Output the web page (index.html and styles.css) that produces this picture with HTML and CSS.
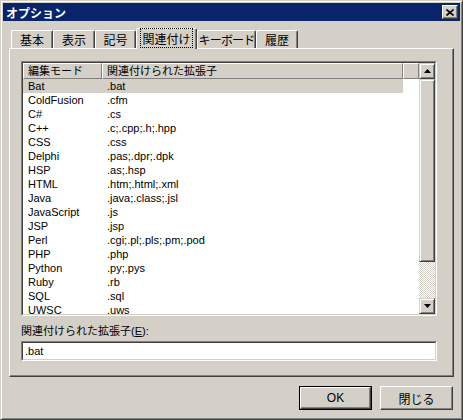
FILE: index.html
```html
<!DOCTYPE html>
<html lang="ja">
<head>
    <meta charset="UTF-8">
    <title>オプション</title>
    <link rel="stylesheet" href="styles.css">
</head>
<body>
    <div class="window">
        <div class="titlebar">
            <span class="title">オプション</span>
            <div class="close-btn">
                <svg width="8" height="7" viewBox="0 0 8 7"><path d="M0.5 0.5 L7.5 6.5 M7.5 0.5 L0.5 6.5" stroke="#000" stroke-width="1.6"/></svg>
            </div>
        </div>

        <div class="dialog-body">
            <div class="tabs">
                <div class="tab w42">基本</div>
                <div class="tab w42">表示</div>
                <div class="tab w41">記号</div>
                <div class="tab active"><span class="focus">関連付け</span></div>
                <div class="tab w59 tight">キーボード</div>
                <div class="tab w42">履歴</div>
            </div>

            <div class="panel">
                <div class="listbox">
                    <div class="list-inner">
                        <div class="list-main">
                            <div class="list-head">
                                <div class="hcell col1">編集モード</div>
                                <div class="hcell col2">関連付けられた拡張子</div>
                                <div class="hcell hfill"></div>
                            </div>
                            <div class="rows">
                                <div class="row selected"><span class="col1">Bat</span><span class="col2">.bat</span></div>
                                <div class="row"><span class="col1">ColdFusion</span><span class="col2">.cfm</span></div>
                                <div class="row"><span class="col1">C#</span><span class="col2">.cs</span></div>
                                <div class="row"><span class="col1">C++</span><span class="col2">.c;.cpp;.h;.hpp</span></div>
                                <div class="row"><span class="col1">CSS</span><span class="col2">.css</span></div>
                                <div class="row"><span class="col1">Delphi</span><span class="col2">.pas;.dpr;.dpk</span></div>
                                <div class="row"><span class="col1">HSP</span><span class="col2">.as;.hsp</span></div>
                                <div class="row"><span class="col1">HTML</span><span class="col2">.htm;.html;.xml</span></div>
                                <div class="row"><span class="col1">Java</span><span class="col2">.java;.class;.jsl</span></div>
                                <div class="row"><span class="col1">JavaScript</span><span class="col2">.js</span></div>
                                <div class="row"><span class="col1">JSP</span><span class="col2">.jsp</span></div>
                                <div class="row"><span class="col1">Perl</span><span class="col2">.cgi;.pl;.pls;.pm;.pod</span></div>
                                <div class="row"><span class="col1">PHP</span><span class="col2">.php</span></div>
                                <div class="row"><span class="col1">Python</span><span class="col2">.py;.pys</span></div>
                                <div class="row"><span class="col1">Ruby</span><span class="col2">.rb</span></div>
                                <div class="row"><span class="col1">SQL</span><span class="col2">.sql</span></div>
                                <div class="row"><span class="col1">UWSC</span><span class="col2">.uws</span></div>
                            </div>
                        </div>
                        <div class="vscroll">
                            <div class="sbtn">
                                <svg width="7" height="4" viewBox="0 0 7 4"><polygon points="3.5,0 7,4 0,4" fill="#000"/></svg>
                            </div>
                            <div class="thumb"></div>
                            <div class="track"></div>
                            <div class="sbtn">
                                <svg width="7" height="4" viewBox="0 0 7 4"><polygon points="0,0 7,0 3.5,4" fill="#000"/></svg>
                            </div>
                        </div>
                    </div>
                </div>

                <div class="field-label">関連付けられた拡張子(<u>E</u>):</div>
                <div class="textbox"><div class="textbox-inner">.bat</div></div>
            </div>

            <div class="buttons">
                <div class="btn default"><div class="btn-face">OK</div></div>
                <div class="btn"><div class="btn-face">閉じる</div></div>
            </div>
        </div>
    </div>
</body>
</html>
```

FILE: styles.css
```css
body {
    margin: 0;
    background: #d4d0c8;
    font-family: "Liberation Sans", "Noto Sans CJK JP", sans-serif;
    font-size: 11px;
    color: #000;
}
.window {
    box-sizing: border-box;
    width: 463px;
    height: 420px;
    padding: 2px;
    background: #d4d0c8;
    border: 1px solid;
    border-color: #d4d0c8 #404040 #404040 #d4d0c8;
    box-shadow: inset 1px 1px #fff, inset -1px -1px #808080;
}
.titlebar {
    height: 18px;
    background: #0a246a;
    display: flex;
    align-items: center;
    justify-content: space-between;
    padding: 0 2px 0 3px;
}
.title {
    color: #fff;
    font-weight: bold;
    font-size: 12px;
}
.close-btn {
    box-sizing: border-box;
    width: 16px;
    height: 14px;
    background: #d4d0c8;
    border: 1px solid;
    border-color: #fff #404040 #404040 #fff;
    box-shadow: inset -1px -1px #808080;
    display: flex;
    align-items: center;
    justify-content: center;
}
.dialog-body {
    padding: 7px 6px 0 6px;
}
.tabs {
    display: flex;
    align-items: flex-end;
    height: 20px;
    padding-left: 2px;
}
.tab {
    box-sizing: border-box;
    height: 18px;
    font-size: 12px;
    white-space: nowrap;
    display: flex;
    align-items: center;
    justify-content: center;
    border-top: 1px solid #fff;
    border-left: 1px solid #fff;
    border-right: 1px solid #404040;
    border-radius: 2px 2px 0 0;
    box-shadow: inset -1px 0 #808080;
    padding-bottom: 1px;
}
.w42 { width: 42px; }
.w41 { width: 41px; }
.w59 { width: 59px; }
.tab.tight {
    letter-spacing: -0.8px;
}
.tab.active {
    width: 61px;
    height: 21px;
    margin-bottom: -1px;
    position: relative;
    z-index: 1;
    background: #d4d0c8;
    padding-bottom: 2px;
}
.focus {
    outline: 1px dotted #000;
    padding: 1px 1px 0 1px;
}
.panel {
    box-sizing: border-box;
    width: 445px;
    height: 329px;
    border: 1px solid;
    border-color: #fff #404040 #404040 #fff;
    box-shadow: inset -1px -1px #808080;
    padding: 12px 0 0 11px;
}
.listbox {
    box-sizing: border-box;
    width: 416px;
    height: 255px;
    border: 1px solid;
    border-color: #808080 #fff #fff #808080;
}
.list-inner {
    box-sizing: border-box;
    height: 100%;
    border: 1px solid;
    border-color: #404040 #d4d0c8 #d4d0c8 #404040;
    background: #fff;
    display: flex;
}
.list-main {
    flex: 1;
    overflow: hidden;
}
.list-head {
    display: flex;
    height: 16px;
}
.hcell {
    box-sizing: border-box;
    height: 16px;
    background: #d4d0c8;
    border-top: 1px solid #fff;
    border-left: 1px solid #fff;
    border-right: 1px solid #808080;
    border-bottom: 1px solid #808080;
    padding-left: 4px;
    line-height: 14px;
}
.hcell.col1 { width: 79px; }
.hcell.col2 { width: 301px; }
.hcell.hfill { flex: 1; }
.row {
    width: 380px;
    height: 14px;
    line-height: 14px;
    display: flex;
    white-space: nowrap;
}
.row.selected {
    background: #d4d0c8;
}
.row .col1 {
    width: 74px;
    padding-left: 5px;
}
.row .col2 {
    padding-left: 5px;
}
.vscroll {
    width: 16px;
    display: flex;
    flex-direction: column;
}
.sbtn, .thumb {
    box-sizing: border-box;
    background: #d4d0c8;
    border: 1px solid;
    border-color: #d4d0c8 #404040 #404040 #d4d0c8;
    box-shadow: inset 1px 1px #fff, inset -1px -1px #808080;
}
.sbtn {
    height: 16px;
    display: flex;
    align-items: center;
    justify-content: center;
}
.thumb {
    height: 183px;
}
.track {
    flex: 1;
    background-image: repeating-conic-gradient(#d4d0c8 0 25%, #fff 0 50%);
    background-size: 2px 2px;
}
.field-label {
    margin-top: 8px;
    height: 14px;
    line-height: 14px;
}
.textbox {
    box-sizing: border-box;
    margin-top: 3px;
    width: 416px;
    height: 20px;
    border: 1px solid;
    border-color: #808080 #fff #fff #808080;
}
.textbox-inner {
    box-sizing: border-box;
    height: 100%;
    border: 1px solid;
    border-color: #404040 #d4d0c8 #d4d0c8 #404040;
    background: #fff;
    padding-left: 2px;
    line-height: 16px;
}
.buttons {
    display: flex;
    justify-content: flex-end;
    gap: 8px;
    margin-top: 9px;
    padding-right: 1px;
}
.btn {
    box-sizing: border-box;
    width: 73px;
    height: 24px;
    background: #d4d0c8;
    border: 1px solid;
    border-color: #fff #404040 #404040 #fff;
    box-shadow: inset -1px -1px #808080;
}
.btn-face {
    height: 100%;
    display: flex;
    align-items: center;
    justify-content: center;
    font-size: 12px;
}
.btn.default {
    border: 1px solid #000;
    box-shadow: none;
}
.btn.default .btn-face {
    box-sizing: border-box;
    border: 1px solid;
    border-color: #fff #404040 #404040 #fff;
    box-shadow: inset -1px -1px #808080;
}
```
